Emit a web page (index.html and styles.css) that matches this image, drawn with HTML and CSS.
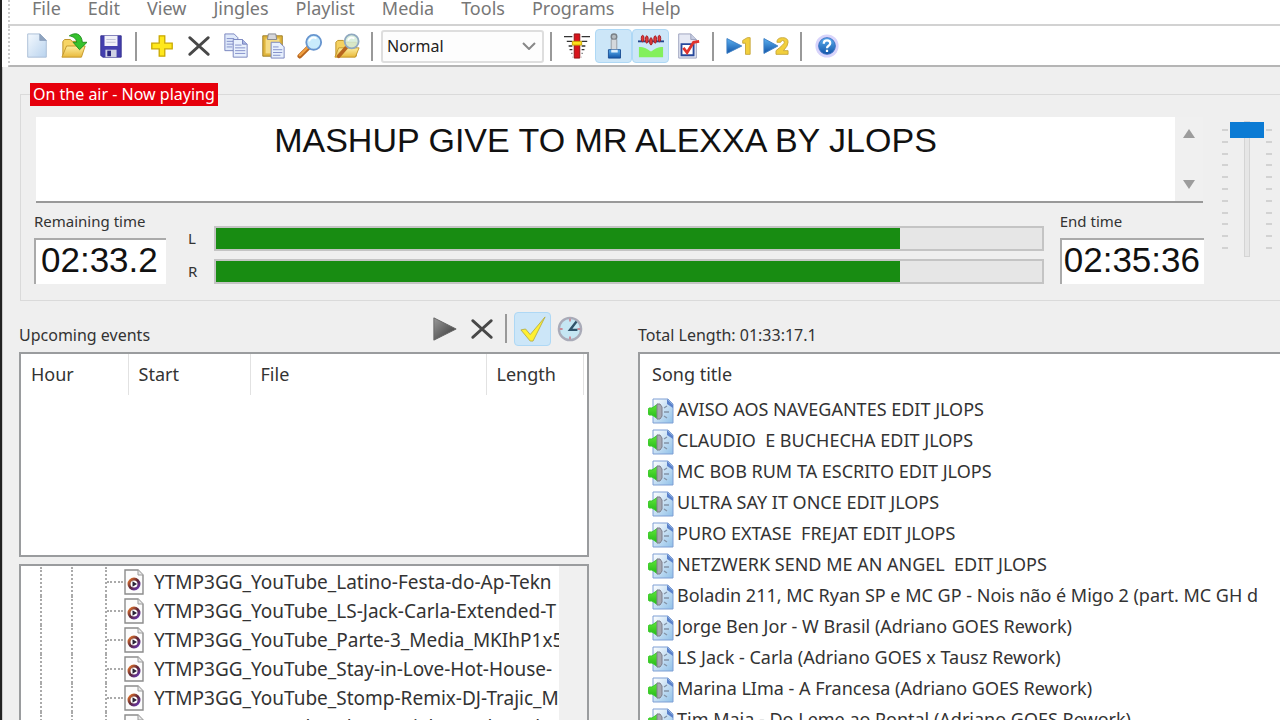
FILE: index.html
```html
<!DOCTYPE html>
<html lang="en">
<head>
  <meta charset="UTF-8">
  <meta name="viewport" content="width=device-width, initial-scale=1.0">
  <title>Radio Automation</title>
  <link rel="stylesheet" href="styles.css">
</head>
<body>
  <!-- shared icons -->
  <svg class="sprite" aria-hidden="true">
    <defs>
      <linearGradient id="gPaper" x1="0" y1="0" x2="1" y2="1">
        <stop offset="0" stop-color="#f4f9fe"/><stop offset="1" stop-color="#b9d3ee"/>
      </linearGradient>
      <linearGradient id="gSong" x1="0" y1="0" x2="1" y2="1">
        <stop offset="0" stop-color="#ffffff"/><stop offset="1" stop-color="#8fc0e8"/>
      </linearGradient>
      <linearGradient id="gFolder" x1="0" y1="0" x2="0" y2="1">
        <stop offset="0" stop-color="#fdeea0"/><stop offset="1" stop-color="#e9b93a"/>
      </linearGradient>
      <linearGradient id="gBlue" x1="0" y1="0" x2="0" y2="1">
        <stop offset="0" stop-color="#5bb0f0"/><stop offset="1" stop-color="#1255a8"/>
      </linearGradient>
      <linearGradient id="gGray" x1="0" y1="0" x2="1" y2="1">
        <stop offset="0" stop-color="#999"/><stop offset="1" stop-color="#333"/>
      </linearGradient>
      <linearGradient id="gGreen" x1="0" y1="0" x2="0" y2="1">
        <stop offset="0" stop-color="#62e83a"/><stop offset="1" stop-color="#22b818"/>
      </linearGradient>
      <linearGradient id="gDisc" x1="0" y1="0" x2="1" y2="1">
        <stop offset="0" stop-color="#e8752a"/><stop offset="0.5" stop-color="#5a2438"/><stop offset="1" stop-color="#6a3ab8"/>
      </linearGradient>
    </defs>
    <symbol id="cross" viewBox="0 0 28 28">
      <path d="M4 5l20 18M24 5L4 23" stroke="#484848" stroke-width="3" stroke-linecap="round" fill="none"/>
    </symbol>
    <symbol id="song" viewBox="0 0 26 26">
      <path d="M5 1h15l5 5v19H5z" fill="url(#gSong)" stroke="#7f9fd4"/>
      <path d="M19 1l6 6v3l-6-4z" fill="#5b82cc"/>
      <path d="M16 10l3-2M16 14h5M16 18l3 2" stroke="#8494a8" stroke-width="1.4"/>
      <path d="M1 10h3l6-4v15l-6-4H1l-1-2v-3z" fill="url(#gGreen)" stroke="#39c82c"/>
      <path d="M9 6h3l2 3v9l-2 3H9z" fill="#a6a8b2" stroke="#7e7f8c"/>
    </symbol>
    <symbol id="media" viewBox="0 0 20 26">
      <path d="M1 1h13l5 5v19H1z" fill="#fcfcfc" stroke="#8c8c8c" stroke-width="1.4"/>
      <path d="M14 1v5h5" fill="#e8e8e8" stroke="#999"/>
      <circle cx="10" cy="15" r="5" fill="#fff" stroke="url(#gDisc)" stroke-width="3"/>
      <path d="M8.500 12.200l4.500 2.800-4.500 2.800z" fill="#2a2438"/>
    </symbol>
  </svg>

  <nav class="menubar">
    <a href="#">File</a>
    <a href="#">Edit</a>
    <a href="#">View</a>
    <a href="#">Jingles</a>
    <a href="#">Playlist</a>
    <a href="#">Media</a>
    <a href="#">Tools</a>
    <a href="#">Programs</a>
    <a href="#">Help</a>
  </nav>

  <div class="toolbar">
    <button class="tool" aria-label="New">
      <svg viewBox="0 0 28 28"><path d="M4 1h13l7 7v18H4z" fill="url(#gPaper)" stroke="#a9bdd6"/><path d="M17 1v7h7z" fill="#8fa3bf" stroke="#8fa3bf"/></svg>
    </button>
    <button class="tool" aria-label="Open">
      <svg viewBox="0 0 28 28"><path d="M2 24V9l2-2h6l2 2h9v4" fill="#f7d565" stroke="#b98e22"/><path d="M1 26l5-12h20l-4 12z" fill="url(#gFolder)" stroke="#c29528"/><path d="M9 3c6-4 13-3 14 7h5l-8 8-7-8h4c-1-5-4-6-8-7z" fill="#35c22d" stroke="#1f8f1c"/></svg>
    </button>
    <button class="tool" aria-label="Save">
      <svg viewBox="0 0 28 28"><path d="M3 3h22v23H5l-2-2z" fill="#433fae" stroke="#37338f"/><path d="M7 3h14v11H7z" fill="#f1f1f8"/><path d="M9 7h10M9 10h10" stroke="#bfc0d6"/><path d="M8 18h12v8H8z" fill="#cfd2e4"/><path d="M10 19h4v6h-4z" fill="#2a2780"/></svg>
    </button>
    <span class="divider"></span>
    <button class="tool" aria-label="Add">
      <svg viewBox="0 0 28 28"><path d="M11 3h6v8h8v6h-8v8h-6v-8H3v-6h8z" fill="#ffe81c" stroke="#c9a800" stroke-width="1.4"/></svg>
    </button>
    <button class="tool" aria-label="Delete"><svg><use href="#cross"/></svg></button>
    <button class="tool" aria-label="Copy">
      <svg viewBox="0 0 28 28"><path d="M2 1h10l4 4v14H2z" fill="#dfe9fa" stroke="#7682bd"/><path d="M4 6h8M4 9h8M4 12h8M4 15h6" stroke="#7f8cc8"/><path d="M11 7h10l5 5v14H11z" fill="#e9f1fd" stroke="#7682bd"/><path d="M21 7v5h5" fill="#a9b7e4" stroke="#7682bd"/><path d="M13 13h7M13 16h11M13 19h11M13 22h11" stroke="#7f8cc8"/></svg>
    </button>
    <button class="tool" aria-label="Paste">
      <svg viewBox="0 0 28 28"><path d="M3 3h21v22H3z" fill="#e0b53c" stroke="#9c7b22"/><path d="M6 6h15v16H6z" fill="#f5dc86"/><path d="M9 1h8l1 6H8z" fill="#d6d7dc" stroke="#84858c"/><path d="M12 10h9l5 5v12H12z" fill="#e7f0fd" stroke="#7682bd"/><path d="M14 15h6M14 18h10M14 21h10M14 24h8" stroke="#7f8cc8"/></svg>
    </button>
    <button class="tool" aria-label="Find">
      <svg viewBox="0 0 28 28"><path d="M3 25l9-9" stroke="#b8661e" stroke-width="5" stroke-linecap="round"/><path d="M3 24l8-8" stroke="#f0a040" stroke-width="2.500" stroke-linecap="round"/><circle cx="18" cy="10" r="8" fill="#c9ecfc" stroke="#6795cf" stroke-width="2"/><path d="M13 9c1-4 5-5 8-3" stroke="#fff" stroke-width="2" fill="none"/></svg>
    </button>
    <button class="tool" aria-label="Browse files">
      <svg viewBox="0 0 28 28"><path d="M2 25V10l2-2h6l2 2h12v15z" fill="#f5d160" stroke="#b98e22"/><path d="M1 26l4-10h22l-4 10z" fill="url(#gFolder)" stroke="#c29528"/><path d="M5 25l8-9" stroke="#b8661e" stroke-width="4" stroke-linecap="round"/><circle cx="19" cy="9" r="7.500" fill="#d4ecd8" fill-opacity=".85" stroke="#90a9c0" stroke-width="2"/><path d="M15 8c1-3 4-4 7-2" stroke="#fff" stroke-width="2" fill="none"/></svg>
    </button>
    <span class="divider"></span>
    <div class="mode">
      <select aria-label="Playback mode">
        <option>Normal</option>
      </select>
      <svg viewBox="0 0 14 8"><path d="M1 1l6 6 6-6"/></svg>
    </div>
    <span class="divider"></span>
    <button class="tool" aria-label="Mixer">
      <svg viewBox="0 0 28 28"><path d="M0 4h28M3 9h22M5 14h18M6 18h16M8 22h12M9 26h10" stroke="#333" stroke-width="1.400"/><path d="M9 0h10v28H9z" fill="#fff"/><path d="M11 1h6v26h-6z" fill="#d8141c" stroke="#8c1010"/><path d="M9 9h10v4H9z" fill="#ffe11a" stroke="#c9a400"/></svg>
    </button>
    <button class="tool active" aria-label="Microphone">
      <svg viewBox="0 0 28 28"><circle cx="14" cy="4" r="3" fill="#b4babf" stroke="#7a8086" stroke-width="1.500"/><path d="M11 7h6v11h-6z" fill="#d4d8dc" stroke="#969ba0"/><path d="M8 18h13v9H8z" fill="url(#gBlue)" stroke="#1b4f94"/><path d="M11 18h7v3h-7z" fill="#dceefc"/></svg>
    </button>
    <button class="tool active" aria-label="Waveform">
      <svg viewBox="0 0 28 28"><path d="M1 15c6 0 9 2 13 5 4-3 7-5 13-5v11H1z" fill="#83f05c"/><path d="M0 9h28" stroke="#24448c" stroke-width="2"/><g fill="#e33a3a" stroke="#a01c24"><ellipse cx="5" cy="6" rx="1.500" ry="3.500"/><ellipse cx="9.500" cy="7" rx="1.500" ry="4"/><ellipse cx="14" cy="9" rx="1.500" ry="4"/><ellipse cx="18.500" cy="7" rx="1.500" ry="4"/><ellipse cx="23" cy="6" rx="1.500" ry="3.500"/></g></svg>
    </button>
    <button class="tool" aria-label="Tasks">
      <svg viewBox="0 0 28 28"><path d="M4 1h13l6 6v20H4z" fill="#e6e9f4" stroke="#9aa0bc"/><path d="M17 1v6h6" fill="#c5cbe0" stroke="#9aa0bc"/><path d="M7 12h13v12H7z" fill="#fff" stroke="#27489c" stroke-width="2"/><path d="M9 16l4 5L20 10l6-1" stroke="#e0322c" stroke-width="3" fill="none"/></svg>
    </button>
    <span class="divider"></span>
    <button class="tool" aria-label="Player 1">
      <svg viewBox="0 0 28 28"><path d="M1 6l16 8-16 8z" fill="url(#gBlue)" stroke="#3c7ec4"/><path d="M18 8l5-3h3v18h-5V11h-3z" fill="#f2cf3c" stroke="#c8a83a"/></svg>
    </button>
    <button class="tool" aria-label="Player 2">
      <svg viewBox="0 0 28 28"><path d="M1 6l15 8-15 8z" fill="url(#gBlue)" stroke="#3c7ec4"/><path d="M15 10q0-5 6-5 6 0 6 5 0 4-5 9h5v4H14v-4q9-7 9-9 0-2-2-2-1 0-2 2z" fill="#f2cf3c" stroke="#c8a83a"/></svg>
    </button>
    <span class="divider"></span>
    <button class="tool" aria-label="Help">
      <svg viewBox="0 0 28 28"><circle cx="14" cy="14" r="12.500" fill="#d8d4fb"/><circle cx="14" cy="14" r="9" fill="url(#gBlue)" stroke="#3c6fc0"/><path d="M10.500 11.500c0-5 7-4.500 7-.5 0 3-3.500 2.500-3.500 5.500M14 18v2.500" stroke="#fff" stroke-width="2.400" fill="none"/></svg>
    </button>
  </div>

  <main>
    <fieldset class="on-air">
      <legend>On the air - Now playing</legend>
      <div class="player">
        <div class="now">
          <textarea readonly aria-label="Now playing">MASHUP GIVE TO MR ALEXXA BY JLOPS</textarea>
          <div class="scroller">
            <button aria-label="Scroll up"><svg viewBox="0 0 14 11"><path d="M7 1l6 9H1z"/></svg></button>
            <button aria-label="Scroll down"><svg viewBox="0 0 14 11"><path d="M7 10L1 1h12z"/></svg></button>
          </div>
        </div>
        <div class="status">
          <div class="time remaining">
            <label for="remaining">Remaining time</label>
            <output id="remaining">02:33.2</output>
          </div>
          <div class="levels">
            <label for="left">L</label>
            <progress id="left" max="1000" value="828"></progress>
            <label for="right">R</label>
            <progress id="right" max="1000" value="828"></progress>
          </div>
          <div class="time">
            <label for="end">End time</label>
            <output id="end">02:35:36</output>
          </div>
        </div>
      </div>
      <div class="volume">
        <div class="ticks"><i></i><i></i><i></i><i></i><i></i><i></i><i></i><i></i><i></i><i></i><i></i></div>
        <input type="range" min="0" max="100" value="100" aria-label="Volume">
        <div class="ticks"><i></i><i></i><i></i><i></i><i></i><i></i><i></i><i></i><i></i><i></i><i></i></div>
      </div>
    </fieldset>

    <div class="columns">
      <section class="left">
        <div class="caption">
          <h2>Upcoming events</h2>
          <div class="actions">
            <button class="tool" aria-label="Play event">
              <svg viewBox="0 0 28 28"><path d="M2 2l24 12L2 26z" fill="url(#gGray)" stroke="#666"/></svg>
            </button>
            <button class="tool" aria-label="Remove event"><svg><use href="#cross"/></svg></button>
            <span class="divider"></span>
            <button class="tool active" aria-label="Enable events">
              <svg viewBox="0 0 28 28"><path d="M1 15l5-1 5 6L27 1 14 27h-3z" fill="#fff032" stroke="#b8b04c"/></svg>
            </button>
            <button class="tool" aria-label="Schedule">
              <svg viewBox="0 0 28 28"><circle cx="14" cy="14" r="12" fill="#c5e6f3" stroke="#a9abb8" stroke-width="2.500"/><path d="M14 3v3M14 22v3M3 14h3M22 14h3" stroke="#ca8a96" stroke-width="2"/><path d="M21 6l-7 9h8" stroke="#2f5269" stroke-width="2.500" fill="none"/></svg>
            </button>
          </div>
        </div>
        <div class="panel events">
          <table>
            <thead>
              <tr><th class="hour">Hour</th><th class="start">Start</th><th class="file">File</th><th class="length">Length</th><td></td></tr>
            </thead>
          </table>
        </div>
        <div class="panel files">
          <ul>
            <li><svg><use href="#media"/></svg><span>YTMP3GG_YouTube_Latino-Festa-do-Ap-Tekn</span></li>
            <li><svg><use href="#media"/></svg><span>YTMP3GG_YouTube_LS-Jack-Carla-Extended-T</span></li>
            <li><svg><use href="#media"/></svg><span>YTMP3GG_YouTube_Parte-3_Media_MKIhP1x5a</span></li>
            <li><svg><use href="#media"/></svg><span>YTMP3GG_YouTube_Stay-in-Love-Hot-House-</span></li>
            <li><svg><use href="#media"/></svg><span>YTMP3GG_YouTube_Stomp-Remix-DJ-Trajic_M</span></li>
            <li><svg><use href="#media"/></svg><span>YTMP3GG_YouTube_The-Sorriab-Go-The-Tak</span></li>
          </ul>
          <div class="track"></div>
        </div>
      </section>

      <section class="right">
        <div class="caption">
          <h2>Total Length: 01:33:17.1</h2>
        </div>
        <div class="panel songs">
          <table>
            <thead>
              <tr><th>Song title</th></tr>
            </thead>
            <tbody>
              <tr><td><svg><use href="#song"/></svg>AVISO AOS NAVEGANTES EDIT JLOPS</td></tr>
              <tr><td><svg><use href="#song"/></svg>CLAUDIO  E BUCHECHA EDIT JLOPS</td></tr>
              <tr><td><svg><use href="#song"/></svg>MC BOB RUM TA ESCRITO EDIT JLOPS</td></tr>
              <tr><td><svg><use href="#song"/></svg>ULTRA SAY IT ONCE EDIT JLOPS</td></tr>
              <tr><td><svg><use href="#song"/></svg>PURO EXTASE  FREJAT EDIT JLOPS</td></tr>
              <tr><td><svg><use href="#song"/></svg>NETZWERK SEND ME AN ANGEL  EDIT JLOPS</td></tr>
              <tr><td><svg><use href="#song"/></svg>Boladin 211, MC Ryan SP e MC GP - Nois não é Migo 2 (part. MC GH d</td></tr>
              <tr><td><svg><use href="#song"/></svg>Jorge Ben Jor - W Brasil (Adriano GOES Rework)</td></tr>
              <tr><td><svg><use href="#song"/></svg>LS Jack - Carla (Adriano GOES x Tausz Rework)</td></tr>
              <tr><td><svg><use href="#song"/></svg>Marina LIma - A Francesa (Adriano GOES Rework)</td></tr>
              <tr><td><svg><use href="#song"/></svg>Tim Maia - Do Leme ao Pontal (Adriano GOES Rework)</td></tr>
            </tbody>
          </table>
        </div>
      </section>
    </div>
  </main>
</body>
</html>
```
FILE: styles.css
```css
:root {
  --bg: #efefef;
  --line: #9a9c9e;
  --text: #333;
  --green: #188c12;
  --blue: #0b7bd4;
}
* {
  box-sizing: border-box;
  margin: 0;
  padding: 0;
}
body {
  display: flex;
  flex-direction: column;
  height: 100vh;
  overflow: hidden;
  background: var(--bg);
  border-left: 2px solid #222;
  color: var(--text);
  font-family: "Noto Sans", "Open Sans", sans-serif;
  font-size: 18px;
}
button {
  border: none;
  background: none;
}
.sprite {
  position: absolute;
  width: 0;
  height: 0;
}

/* menu + toolbar */
.menubar {
  display: flex;
  gap: 27px;
  height: 26px;
  padding-left: 22px;
  margin-left: 6px;
  background: #fff;
  border-left: 2px dotted #ccc;
  border-bottom: 2px solid #d2d2d2;
  line-height: 16px;
}
.menubar a {
  color: #777;
  text-decoration: none;
}
.toolbar {
  display: flex;
  align-items: center;
  height: 41px;
  padding: 1px 0 0 8px;
  margin-left: 6px;
  background: #fff;
  border-left: 2px dotted #ccc;
  border-bottom: 2px solid #b5b5b5;
}
.menubar, .toolbar {
  flex: none;
  box-shadow: -6px 0 #fff;
}
.tool {
  display: flex;
  align-items: center;
  justify-content: center;
  width: 37px;
  height: 34px;
  border: 1px solid transparent;
  border-radius: 4px;
}
.tool.active {
  background: #cce6f8;
  border-color: #aed8f5;
}
.tool svg {
  width: 26px;
  height: 26px;
}
.divider {
  width: 2px;
  height: 29px;
  margin: 0 6px;
  background: #999;
}
.mode {
  display: flex;
  align-items: center;
  width: 163px;
  height: 33px;
  margin-left: 2px;
  padding-right: 6px;
  border: 2px solid #dedede;
  border-radius: 3px;
  background: #fdfdfd;
}
.mode select {
  flex: 1;
  height: 100%;
  padding-left: 4px;
  appearance: none;
  border: none;
  outline: none;
  background: none;
  color: #222;
  font-family: inherit;
  font-size: 16px;
}
.mode svg {
  width: 14px;
  height: 8px;
  fill: none;
  stroke: #888;
  stroke-width: 2;
}

/* now playing */
main {
  flex: 1;
  min-height: 0;
  display: flex;
  flex-direction: column;
  padding: 16px 0 0 17px;
  border-left: 1px solid #ccc;
}
.on-air {
  display: flex;
  gap: 18px;
  height: 218px;
  padding: 11px 8px 0 13px;
  border: 1px solid #dadada;
  border-right: none;
}
.on-air legend {
  height: 23px;
  margin-left: -4px;
  padding: 0 3px;
  background: #e6000c;
  color: #fff;
  font-size: 16px;
  line-height: 22px;
}
.player {
  flex: 1;
}
.now {
  display: flex;
  height: 86px;
  margin: 0 1px 0 2px;
  background: #fff;
  border-bottom: 2px solid #999;
}
.now textarea {
  flex: 1;
  border: none;
  outline: none;
  resize: none;
  overflow: hidden;
  background: #fff;
  color: #111;
  font: 34px/46px "Liberation Sans", Arial, sans-serif;
  text-align: center;
}
.scroller {
  display: flex;
  flex-direction: column;
  justify-content: space-between;
  width: 28px;
  padding: 10px 6px 8px;
  background: #f0f0f0;
}
.scroller svg {
  width: 14px;
  height: 11px;
  fill: #9c9c9c;
}
.status {
  display: flex;
  gap: 16px;
  padding-top: 8px;
}
.time label {
  display: block;
  font-size: 15px;
  line-height: 20px;
}
.time output {
  display: block;
  height: 46px;
  margin-top: 7px;
  padding: 0 4px 0 2px;
  background: #fff;
  border-top: 2px solid #aaa;
  border-left: 2px solid #aaa;
  color: #111;
  font: 35px/40px "Liberation Sans", Arial, sans-serif;
}
.remaining {
  width: 132px;
}
.remaining output {
  padding-left: 5px;
}
.levels {
  flex: 1;
  display: grid;
  grid-template-columns: 26px 1fr;
  gap: 8px 0;
  align-content: start;
  padding: 15px 0 0 6px;
  font-size: 15px;
  line-height: 24px;
}
.levels progress {
  width: 100%;
  height: 25px;
  appearance: none;
  border: 2px solid #c4c4c4;
  background: #e6e6e6;
}
.levels progress::-webkit-progress-bar {
  background: #e6e6e6;
}
.levels progress::-webkit-progress-value {
  background: var(--green);
}

/* volume fader */
.volume {
  display: flex;
  gap: 2px;
  height: 140px;
}
.ticks {
  display: flex;
  flex-direction: column;
  justify-content: space-between;
  height: 120px;
  margin-top: 12px;
}
.ticks i {
  width: 6px;
  height: 2px;
  background: #d2d2d2;
}
.volume input {
  width: 34px;
  height: 136px;
  margin-top: 4px;
  appearance: none;
  writing-mode: vertical-lr;
  direction: rtl;
  background: none;
}
.volume input::-webkit-slider-runnable-track {
  width: 6px;
  background: #e6e6e6;
  border: 1px solid #d4d4d4;
}
.volume input::-webkit-slider-thumb {
  appearance: none;
  width: 34px;
  height: 16px;
  margin-left: -15px;
  background: var(--blue);
}

/* lists */
.columns {
  flex: 1;
  min-height: 0;
  display: grid;
  grid-template-columns: 570px 1fr;
  gap: 49px;
  margin-left: -1px;
}
.left, .right {
  min-width: 0;
  min-height: 0;
  display: flex;
  flex-direction: column;
}
.caption {
  flex: none;
  display: flex;
  justify-content: space-between;
  height: 51px;
}
.caption h2 {
  padding-top: 23px;
  font-size: 16px;
  font-weight: normal;
  line-height: 22px;
}
.actions {
  display: flex;
  align-items: center;
  padding: 4px 1px 0 0;
}
.actions .divider {
  margin: 0 7px 0 5px;
}
.panel {
  background: #fff;
  border: 2px solid var(--line);
}
table {
  width: 100%;
  border-collapse: collapse;
}
th {
  font-weight: normal;
  text-align: left;
}
.events {
  height: 205px;
  margin-bottom: 7px;
  flex: none;
}
.events table {
  table-layout: fixed;
}
.events th {
  height: 41px;
  padding: 0 0 2px 10px;
  border-right: 1px solid #e2e2e2;
}
.hour {
  width: 107px;
}
.start {
  width: 122px;
}
.file {
  width: 236px;
}
.length {
  width: 97px;
}
.files {
  flex: 1;
  min-height: 0;
  display: flex;
  overflow: hidden;
  border-bottom: none;
}
.files ul {
  flex: 1;
  min-width: 0;
  padding: 1px 0 0 19px;
  list-style: none;
  overflow: hidden;
}
.files li {
  display: flex;
  align-items: center;
  height: 29px;
  border-left: 2px dotted #aaa;
  font-size: 19px;
  white-space: nowrap;
}
/* dotted tree lines */
.files li::before {
  content: "";
  flex: none;
  width: 32px;
  height: 29px;
  margin-left: 29px;
  border-left: 2px dotted #aaa;
  border-right: 2px dotted #aaa;
}
.files li::after {
  content: "";
  flex: none;
  width: 16px;
  border-top: 2px dotted #aaa;
}
.files svg {
  order: 1;
  flex: none;
  width: 20px;
  height: 26px;
  margin-left: 1px;
}
.files li span {
  order: 2;
  padding-left: 10px;
}
.track {
  width: 28px;
  background: #f0f0f0;
}
.songs {
  flex: 1;
  min-height: 0;
  overflow: hidden;
  border-right: none;
  border-bottom: none;
}
.songs th {
  height: 41px;
  padding: 0 0 2px 12px;
}
.songs td {
  height: 31px;
  padding-left: 8px;
  white-space: pre;
}
.songs td svg {
  width: 26px;
  height: 26px;
  margin-right: 3px;
  vertical-align: middle;
}
```
